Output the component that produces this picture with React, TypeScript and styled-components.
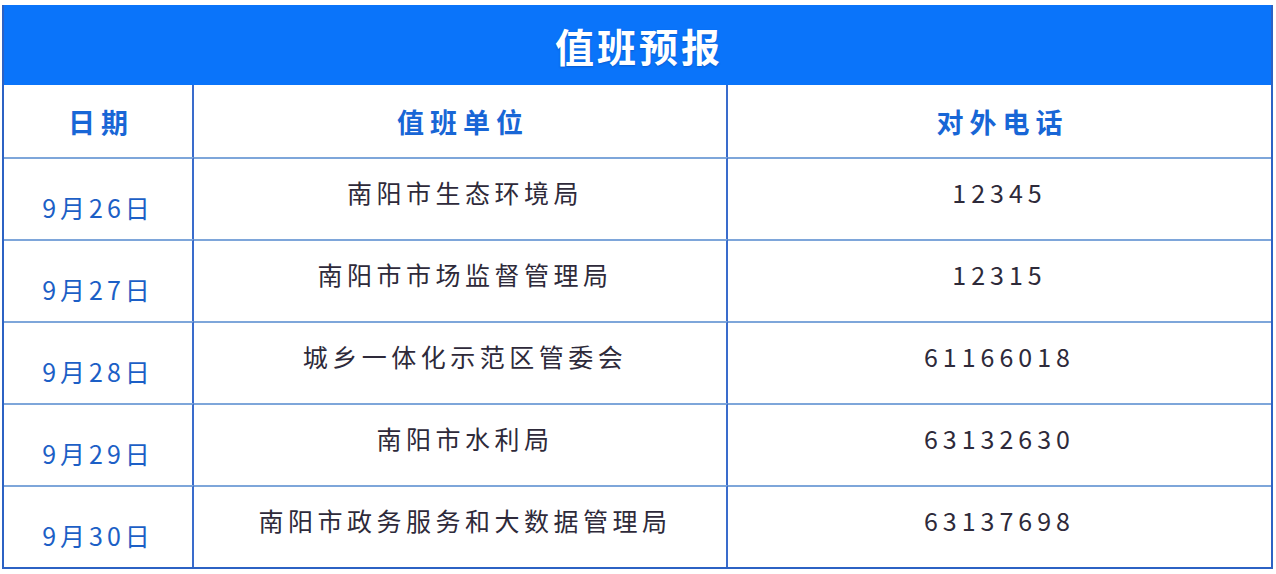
import React from "react";
import styled, { createGlobalStyle } from "styled-components";

const GlobalStyle = createGlobalStyle`
  html, body {
    margin: 0;
    padding: 0;
    background: #ffffff;
  }
  body {
    font-family: "Noto Sans CJK SC", "Noto Sans", sans-serif;
  }
`;

const Board = styled.div`
  width: 1267px;
  margin: 5px 0 0 2px;
  border: 2px solid #2c62c4;
  border-top: none;
  background: #fff;
`;

const TitleBar = styled.div`
  height: 80px;
  background: #0a74fa;
  display: flex;
  align-items: center;
  justify-content: center;
  color: #fff;
  font-size: 39px;
  font-weight: 700;
  letter-spacing: 3px;
  padding-left: 3px;
  text-shadow: 0 1px 2px rgba(0, 40, 120, 0.35);
`;

const Grid = styled.div`
  display: grid;
  grid-template-columns: 190px 534px 1fr;
  grid-template-rows: 72px repeat(5, 82px);
`;

const HeadCell = styled.div<{ $last?: boolean }>`
  display: flex;
  align-items: center;
  justify-content: center;
  border-right: ${(p) => (p.$last ? "none" : "2px solid #3a6ccc")};
  color: #1866d6;
  font-size: 27px;
  font-weight: 700;
  letter-spacing: 6px;
  padding-left: 6px;
`;

const Cell = styled.div<{ $kind: "date" | "unit" | "phone" }>`
  display: flex;
  justify-content: center;
  align-items: flex-start;
  border-top: 2px solid #7ea6da;
  border-right: ${(p) => (p.$kind === "phone" ? "none" : "2px solid #3a6ccc")};
  padding-top: ${(p) => (p.$kind === "date" ? "33px" : "18px")};
  padding-left: ${(p) => (p.$kind === "unit" ? "10px" : "0")};
  line-height: 30px;
  font-size: ${(p) => (p.$kind === "date" ? "25px" : "25px")};
  letter-spacing: ${(p) =>
    p.$kind === "date" ? "4px" : p.$kind === "phone" ? "5px" : "4.5px"};
  color: ${(p) => (p.$kind === "date" ? "#1c5fc6" : "#2e2a3a")};
`;

const rows = [
  { date: "9月26日", unit: "南阳市生态环境局", phone: "12345" },
  { date: "9月27日", unit: "南阳市市场监督管理局", phone: "12315" },
  { date: "9月28日", unit: "城乡一体化示范区管委会", phone: "61166018" },
  { date: "9月29日", unit: "南阳市水利局", phone: "63132630" },
  { date: "9月30日", unit: "南阳市政务服务和大数据管理局", phone: "63137698" },
];

export default function App() {
  return (
    <>
      <GlobalStyle />
      <Board>
        <TitleBar>值班预报</TitleBar>
        <Grid>
          <HeadCell>日期</HeadCell>
          <HeadCell>值班单位</HeadCell>
          <HeadCell $last>对外电话</HeadCell>
          {rows.map((r) => (
            <React.Fragment key={r.date}>
              <Cell $kind="date">{r.date}</Cell>
              <Cell $kind="unit">{r.unit}</Cell>
              <Cell $kind="phone">{r.phone}</Cell>
            </React.Fragment>
          ))}
        </Grid>
      </Board>
    </>
  );
}
